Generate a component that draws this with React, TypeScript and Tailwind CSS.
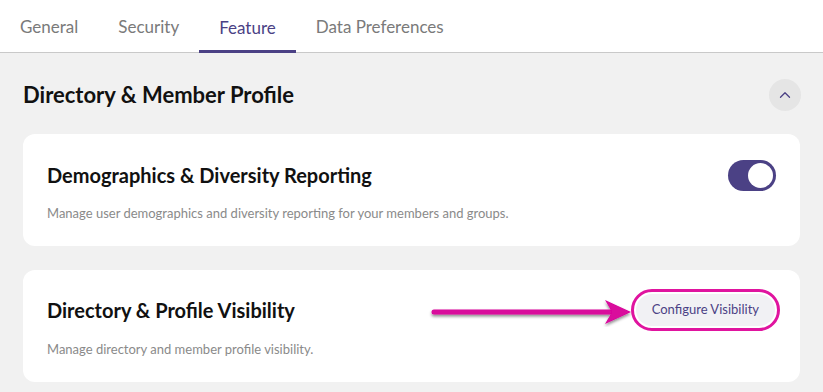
import { ChevronUp } from "lucide-react";

const tabs = ["General", "Security", "Feature", "Data Preferences"];

function Toggle() {
  return (
    <div className="w-[48px] h-[31px] rounded-full bg-[#4b4185] flex items-center justify-end pr-[3px]">
      <div className="w-[25px] h-[25px] rounded-full bg-white" />
    </div>
  );
}

export default function App() {
  return (
    <div
      className="w-[823px] h-[392px] bg-[#f1f1f1] overflow-hidden"
      style={{ fontFamily: "Lato, 'Open Sans', sans-serif" }}
    >
      {/* Tabs */}
      <div className="h-[53px] bg-white border-b border-[#c9c9c9] flex">
        {tabs.map((tab) => (
          <div
            key={tab}
            className={
              tab === "Feature"
                ? "px-5 flex items-center text-[17px] text-[#4b4185] border-b-[3px] border-[#4b4185] pt-[5px] -mb-px"
                : "px-5 flex items-center text-[17px] text-[#7a7a7a] pt-[2px]"
            }
          >
            {tab}
          </div>
        ))}
      </div>

      <div className="px-[23px]">
        {/* Section header */}
        <div className="mt-[26px] h-[32px] flex items-center justify-between">
          <h2 className="text-[22px] font-bold text-[#111] leading-none">
            Directory &amp; Member Profile
          </h2>
          <button className="w-[32px] h-[32px] rounded-full bg-[#e5e5e5] flex items-center justify-center mr-[-1px]">
            <ChevronUp size={18} strokeWidth={1.75} className="text-[#4b4185]" />
          </button>
        </div>

        {/* Card 1 */}
        <div className="mt-[23px] h-[112px] bg-white rounded-xl px-6 pt-[27px]">
          <div className="flex items-center justify-between h-[28px]">
            <h3 className="text-[20px] font-bold text-[#111]">
              Demographics &amp; Diversity Reporting
            </h3>
            <Toggle />
          </div>
          <p className="mt-[15px] text-[13px] leading-[18px] text-[#8a8a8a]">
            Manage user demographics and diversity reporting for your members and groups.
          </p>
        </div>

        {/* Card 2 */}
        <div className="mt-[24px] h-[112px] bg-white rounded-xl px-6 pt-[26px] relative">
          <div className="flex items-center justify-between h-[28px]">
            <h3 className="text-[20px] font-bold text-[#111]">
              Directory &amp; Profile Visibility
            </h3>
            <div className="rounded-full border-[3px] border-[#e0149f] p-[2px] mr-[-4px]">
              <button className="rounded-full bg-[#f1f1f4] px-[16px] h-[32px] text-[13px] text-[#4b4185]">
                Configure Visibility
              </button>
            </div>
          </div>
          <p className="mt-[16px] text-[13px] leading-[18px] text-[#8a8a8a]">
            Manage directory and member profile visibility.
          </p>

          {/* Annotation arrow */}
          <svg
            className="absolute left-[405px] top-[27px]"
            width="210"
            height="30"
            viewBox="0 0 210 30"
          >
            <defs>
              <filter id="sh" x="-10%" y="-50%" width="120%" height="200%">
                <feDropShadow dx="0" dy="2" stdDeviation="1.5" floodColor="#000" floodOpacity="0.45" />
              </filter>
            </defs>
            <g filter="url(#sh)">
              <line x1="6" y1="15" x2="186" y2="15" stroke="#d9079c" strokeWidth="5" strokeLinecap="round" />
              <path d="M177 3 L203 15 L177 27 L184 15 Z" fill="#d9079c" />
            </g>
          </svg>
        </div>
      </div>
    </div>
  );
}
